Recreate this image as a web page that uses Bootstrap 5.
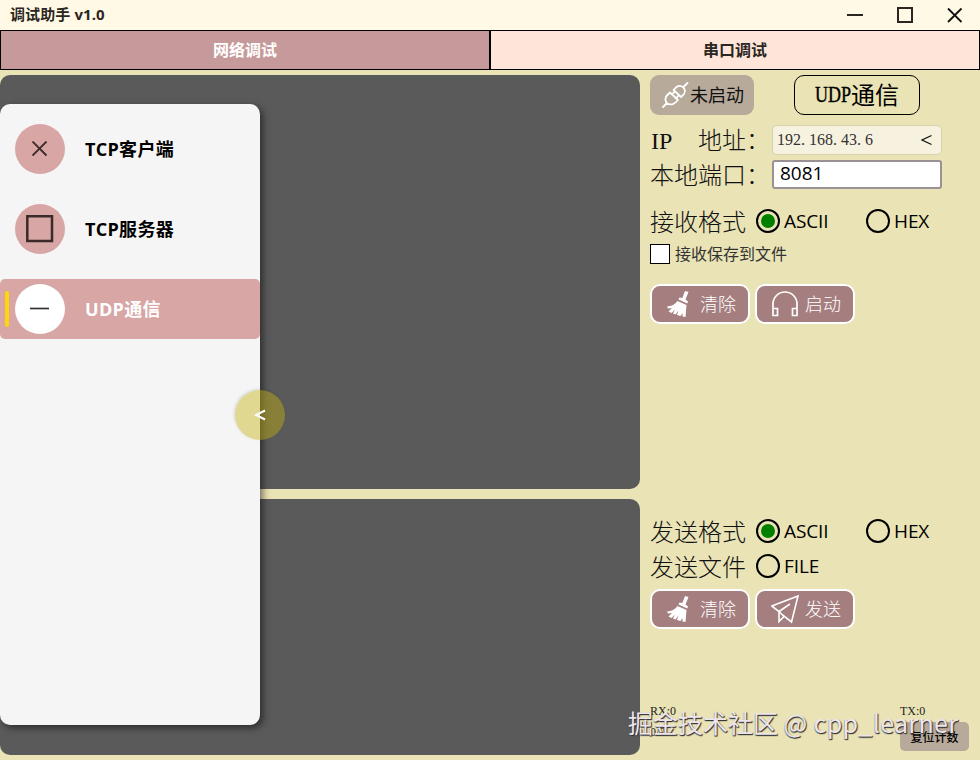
<!DOCTYPE html>
<html lang="zh-CN">
<head>
<meta charset="utf-8">
<meta name="viewport" content="width=device-width, initial-scale=1">
<title>调试助手 v1.0</title>
<link href="https://cdn.jsdelivr.net/npm/bootstrap@5.3.0/dist/css/bootstrap.min.css" rel="stylesheet">
<style>
body{width:980px;height:760px;overflow:hidden;background:#e9e3b5;color:#111;font-family:"Open Sans","Noto Sans CJK SC",sans-serif;line-height:1}
svg{display:block;flex:none}
.title-bar{height:30px;background:#fff9e5;padding:0 16px 0 10px;font-size:15px;font-weight:700;color:#2b2622}
.title-bar>span{padding-bottom:2px;letter-spacing:.1px}
.win-icons{gap:32px}
.mode-tab,.mode-tab.active{height:40px;border:1px solid #000;border-radius:0;background:#ffe5d9;font-size:16px;font-weight:700;color:#2b2622;padding:0}
.mode-tab.active{background:#c69a9b;color:#fff}
.main-area{height:690px;padding:5px 0}
.log-side{width:640px;gap:10px}
.pane{background:#5a5a5a;border-radius:10px}
.pane-top{height:414px}
.pane-bottom{height:256px}
.control-side{width:340px;padding-left:10px}
.drawer{left:0;top:104px;width:260px;height:621px;background:#f5f5f5;border-radius:10px;box-shadow:3px 3px 7px rgba(0,0,0,.5);padding-top:15px;gap:20px}
.drawer-item{height:60px;padding-left:15px;gap:20px;border-radius:5px;font-size:18px;color:#000}
.drawer-item b{padding-bottom:1px;font-weight:700;letter-spacing:.3px}
.drawer-item.current{background:#d7a6a5;color:#fff}
.disc{width:50px;height:50px;border-radius:50%;background:#d7a6a5}
.current .disc{background:#fff}
.current-bar{left:5px;top:12px;width:4px;height:36px;border-radius:2px;background:#ffd60a}
.fold-knob{left:235px;top:390px;width:50px;height:50px;border-radius:50%;background:rgba(198,178,15,.43);color:#fff;box-shadow:-1px -1px 3px rgba(0,0,0,.12)}
.song{font-family:"Noto Sans CJK SC",sans-serif;font-weight:300}
.latin{font-family:"Liberation Serif",serif;display:inline-block;transform-origin:0 50%;white-space:nowrap}
.state-box{width:104px;height:40px;border-radius:9px;background:#b7aa9a;font-size:18px;font-weight:400;padding-left:11px;gap:1px;color:#111}
.state-box span{padding-bottom:3px}
.kind-box{width:126px;height:40px;border:1px solid #000;border-radius:10px;margin-left:40px;padding-bottom:2px;font-size:24px;font-weight:400;color:#000}
.kind-box .latin{width:36px;transform:scaleX(.75);-webkit-text-stroke:.4px #000}
.row-ip{height:30px;margin-top:10px}
.row-port{height:29px;margin-top:5px}
.row-recv{height:24px;margin-top:20px}
.row-save{height:20px;margin-top:11px;gap:5px}
.row-recv-act{height:40px;margin-top:20px;gap:5px}
.row-send{height:24px;margin-top:195px}
.row-file{height:24px;margin-top:11px}
.row-send-act{height:40px;margin-top:11px;gap:5px}
.row-counts{margin-top:76px}
.field-label{width:122px;font-size:24px;white-space:nowrap}
.field-label .latin{width:48px;padding-left:1px}
.row-port .field-label{padding-bottom:2px}
.ip-select{width:170px;height:30px;border:1px solid #d9d2ad;border-radius:5px;background:#f7f2e0;padding:0 9px 0 4px;font-size:16px;color:#333}
.ip-select .dot{display:inline-block;width:8px}
.port-input{width:170px;height:29px;border:2px solid #999194;border-radius:3px;background:#fff;padding:0 6px 3px;font-size:19px;color:#000;font-family:"Open Sans",sans-serif;line-height:22px}
.fmt-label{width:106px;font-size:24px;white-space:nowrap}
.opt{gap:4px;font-size:19px;color:#000;letter-spacing:-.1px}
.opt-wide{width:110px}
.ring{width:24px;height:24px;border:2px solid #000;border-radius:50%}
.ring.on::after{content:"";width:14px;height:14px;border-radius:50%;background:#008000}
.save-box{width:20px;height:20px;border:1px solid #000;background:#fff}
.save-text{font-size:16px;color:#333}
.act{width:100px;height:40px;border:2px solid #fff;border-radius:10px;background:#a57e7f;color:#fff;font-size:18px;padding:0 0 0 13px;gap:7px}
.act span{padding-bottom:2px}
.act.wide-icon{gap:6px;padding-left:14px}
.act:hover{background:#9a7374;color:#fff;border-color:#fff}
.counts-rx{width:250px;gap:9px}
.counts-tx{gap:5px}
.counts-rx .latin,.counts-tx .latin{font-size:12px;line-height:12px;color:#222}
.reset{width:69px;height:29px;border-radius:5px;background:#b7aa9a;font-size:12px;font-weight:500;color:#000}
.stamp{left:628px;top:704px;font-family:"Noto Sans CJK SC",sans-serif;font-size:25px;line-height:36px;color:#eee6ec;white-space:nowrap;text-shadow:1px 1px 1px #333,0 1px 1px #555}
.stamp span{letter-spacing:.35px}
</style>
</head>
<body>
<header class="title-bar d-flex justify-content-between align-items-center">
  <span>调试助手 v1.0</span>
  <div class="win-icons d-flex align-items-center">
    <svg width="18" height="18" viewBox="0 0 18 18" stroke="#2b2622" stroke-width="2"><path d="M1 9H17"/></svg>
    <svg width="18" height="18" viewBox="0 0 18 18" fill="none" stroke="#2b2622" stroke-width="2"><path d="M2 2H16V16H2Z"/></svg>
    <svg width="18" height="18" viewBox="0 0 18 18" stroke="#111" stroke-width="1.8"><path d="M2 2.500L15.500 16M15.500 2.500L2 16"/></svg>
  </div>
</header>
<nav class="d-flex">
  <button class="btn mode-tab active w-50">网络调试</button>
  <button class="btn mode-tab w-50">串口调试</button>
</nav>
<main class="main-area d-flex">
  <section class="log-side d-flex flex-column">
    <div class="pane pane-top"></div>
    <div class="pane pane-bottom"></div>
  </section>
  <section class="control-side d-flex flex-column">
    <div class="d-flex">
      <div class="state-box song d-flex align-items-center">
        <svg width="28" height="28" viewBox="0 0 28 28" fill="none" stroke="#fff" stroke-width="1.8" stroke-linejoin="round" stroke-linecap="round"><path d="M2 26L6 22M5.500 22C3 17 5 15 9 11.500L17 19C13.500 23 10.500 25 5.500 22ZM11 13.500L14 10M15 17.500L18 14M12.500 9L20 16C24 13 25.500 10.500 22.500 6.500C18 3 15.500 5.500 12.500 9ZM22.500 6L26.500 2"/></svg>
        <span>未启动</span>
      </div>
      <div class="kind-box song d-flex align-items-center justify-content-center"><span class="latin">UDP</span><span>通信</span></div>
    </div>
    <div class="row-ip d-flex align-items-center">
      <div class="field-label song"><span class="latin">IP</span>地址：</div>
      <div class="ip-select d-flex align-items-center justify-content-between">
        <span class="latin">192<span class="dot">.</span>168<span class="dot">.</span>43<span class="dot">.</span>6</span>
        <svg width="11" height="12" viewBox="0 0 11 12" fill="none" stroke="#111" stroke-width="1.3"><path d="M10.500 1.500L1 6L10.500 10.500"/></svg>
      </div>
    </div>
    <div class="row-port d-flex align-items-center">
      <div class="field-label song">本地端口：</div>
      <input class="port-input" type="text" value="8081" aria-label="本地端口">
    </div>
    <div class="row-recv d-flex align-items-center">
      <div class="fmt-label song">接收格式</div>
      <div class="opt opt-wide d-flex align-items-center"><span class="ring on d-flex align-items-center justify-content-center"></span>ASCII</div>
      <div class="opt d-flex align-items-center"><span class="ring"></span>HEX</div>
    </div>
    <div class="row-save d-flex align-items-center">
      <span class="save-box"></span><span class="save-text">接收保存到文件</span>
    </div>
    <div class="row-recv-act d-flex">
      <button class="btn act song d-flex align-items-center">
        <svg width="28" height="30" viewBox="0 0 28 30"><path fill="#fff" d="M20 2L23.500 3L20.500 10.500L23 12.500L22.300 14.500L13.500 10.500L14.500 8.500L17.300 9ZM12.500 12L21.500 16L20.500 28L17.500 27.500V24L15.500 27L12 26L13.500 21.500L10.500 25.500L8 24.500L10 20.500L6.500 24L3.500 22.500L7 19L3 19.500L2 17.500C6.500 17 10 15.500 12.500 12Z"/></svg><span>清除</span>
      </button>
      <button class="btn act wide-icon song d-flex align-items-center">
        <svg width="28" height="28" viewBox="0 0 28 28" fill="none" stroke="#fff" stroke-width="1.7"><path d="M2 25.500V14A12 12 0 0 1 26 14V25.500M2 18.500H6.500V25.500H2ZM21.500 18.500H26V25.500H21.500Z"/></svg><span>启动</span>
      </button>
    </div>
    <div class="row-send d-flex align-items-center">
      <div class="fmt-label song">发送格式</div>
      <div class="opt opt-wide d-flex align-items-center"><span class="ring on d-flex align-items-center justify-content-center"></span>ASCII</div>
      <div class="opt d-flex align-items-center"><span class="ring"></span>HEX</div>
    </div>
    <div class="row-file d-flex align-items-center">
      <div class="fmt-label song">发送文件</div>
      <div class="opt d-flex align-items-center"><span class="ring"></span>FILE</div>
    </div>
    <div class="row-send-act d-flex">
      <button class="btn act song d-flex align-items-center">
        <svg width="28" height="30" viewBox="0 0 28 30"><path fill="#fff" d="M20 2L23.500 3L20.500 10.500L23 12.500L22.300 14.500L13.500 10.500L14.500 8.500L17.300 9ZM12.500 12L21.500 16L20.500 28L17.500 27.500V24L15.500 27L12 26L13.500 21.500L10.500 25.500L8 24.500L10 20.500L6.500 24L3.500 22.500L7 19L3 19.500L2 17.500C6.500 17 10 15.500 12.500 12Z"/></svg><span>清除</span>
      </button>
      <button class="btn act wide-icon song d-flex align-items-center">
        <svg width="28" height="30" viewBox="0 0 28 30" fill="none" stroke="#fff" stroke-width="1.6"><path d="M.8 12L27 2L20.500 28L11.500 21L8 17.500ZM19 10L8 17.500V27.500L13 22.500"/></svg><span>发送</span>
      </button>
    </div>
    <div class="row-counts d-flex">
      <div class="counts-rx d-flex flex-column"><div class="latin">RX:0</div><div class="latin">0/0</div></div>
      <div class="counts-tx d-flex flex-column"><div class="latin">TX:0</div><div class="reset song d-flex align-items-center justify-content-center">复位计数</div></div>
    </div>
  </section>
</main>
<aside class="drawer position-absolute d-flex flex-column">
  <div class="drawer-item d-flex align-items-center">
    <span class="disc d-flex align-items-center justify-content-center"><svg width="16" height="16" viewBox="0 0 16 16" stroke="#3a2b29" stroke-width="1.800"><path d="M.5 .5L14.500 14.500M14.500 .5L.5 14.500"/></svg></span><b>TCP客户端</b>
  </div>
  <div class="drawer-item d-flex align-items-center">
    <span class="disc d-flex align-items-center justify-content-center"><svg width="28" height="28" viewBox="0 0 28 28" fill="none" stroke="#3a2b29" stroke-width="2.500"><path d="M1.300 1.300H26V26H1.300Z"/></svg></span><b>TCP服务器</b>
  </div>
  <div class="drawer-item current position-relative d-flex align-items-center">
    <span class="current-bar position-absolute"></span>
    <span class="disc d-flex align-items-center justify-content-center"><svg width="20" height="4" viewBox="0 0 20 4" stroke="#333" stroke-width="1.700"><path d="M0 1.500H19"/></svg></span><b>UDP通信</b>
  </div>
</aside>
<button class="btn fold-knob position-absolute d-flex align-items-center justify-content-center p-0 border-0" aria-label="收起"><svg width="12" height="12" viewBox="0 0 12 12" fill="none" stroke="#fff" stroke-width="2"><path d="M11 1.500L2 6L11 10.500"/></svg></button>
<div class="stamp position-absolute">掘金技术社区 <span>@ cpp_learner</span></div>
<script src="https://cdn.jsdelivr.net/npm/bootstrap@5.3.0/dist/js/bootstrap.bundle.min.js"></script>
</body>
</html>
